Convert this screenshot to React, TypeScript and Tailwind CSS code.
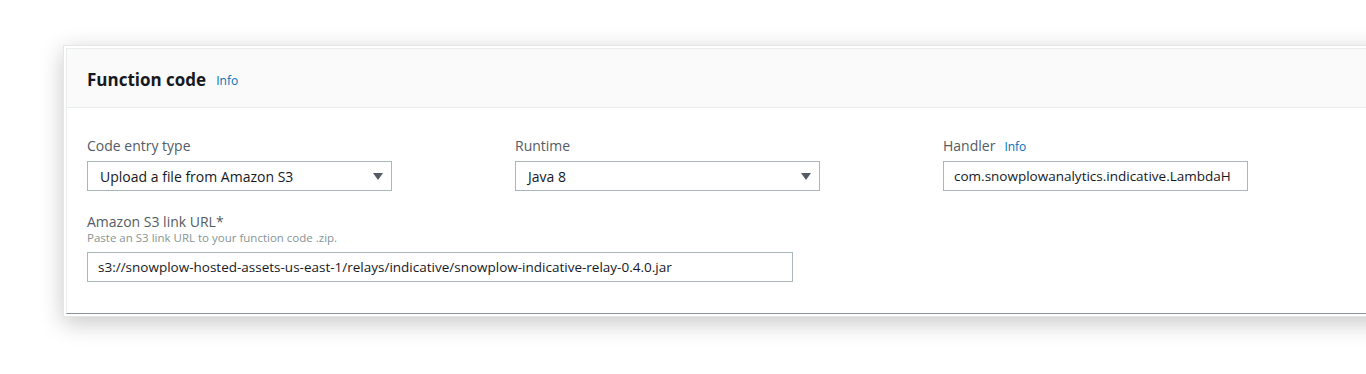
import React from 'react';

const font = { fontFamily: '"Open Sans", "Liberation Sans", Arial, sans-serif' };

const Caret: React.FC = () => (
  <svg width="10" height="7" viewBox="0 0 10 7" className="shrink-0">
    <path d="M0 0 H10 L5 7 Z" fill="#545b64" />
  </svg>
);

const SelectBox: React.FC<{ value: string }> = ({ value }) => (
  <div className="w-[305px] h-[30px] flex items-center justify-between pl-[12px] pr-[8px] border border-[#aab7b8] bg-white text-[14px] text-[#16191f]">
    <span>{value}</span>
    <Caret />
  </div>
);

const TextBox: React.FC<{ value: string; width: string }> = ({ value, width }) => (
  <div className={`${width} h-[30px] flex items-center pl-[10px] pr-[6px] border border-[#aab7b8] bg-white text-[13.5px] text-[#16191f] overflow-hidden whitespace-nowrap`}>
    {value}
  </div>
);

const Label: React.FC<{ children: React.ReactNode; info?: boolean }> = ({ children, info }) => (
  <div className="h-[20px] leading-[20px] text-[14px] text-[#545b64] flex items-baseline gap-[9px] mb-[5px]">
    <span>{children}</span>
    {info && <span className="text-[12px] text-[#0073bb]">Info</span>}
  </div>
);

export default function App() {
  return (
    <div className="w-[1366px] h-[374px] bg-white overflow-hidden" style={font}>
      <div className="ml-[63px] mt-[45px] w-[1340px] p-[2px] bg-white border border-[#e6e6e6] shadow-[0_6px_22px_rgba(0,0,0,0.22)]">
        <div className="border border-[#eaeded] border-b-[#879596] bg-white">
          {/* header */}
          <div className="h-[59px] bg-[#fafafa] border-b border-[#eaeded] px-[20px] flex items-center pt-[3px]">
            <h2 className="text-[17px] font-bold text-[#16191f] leading-[24px]">Function code</h2>
            <span className="ml-[10px] text-[12px] text-[#0073bb] mt-[2px]">Info</span>
          </div>
          {/* body */}
          <div className="px-[20px] pt-[28px] pb-[31px]">
            <div className="flex gap-[123px]">
              <div>
                <Label>Code entry type</Label>
                <SelectBox value="Upload a file from Amazon S3" />
              </div>
              <div>
                <Label>Runtime</Label>
                <SelectBox value="Java 8" />
              </div>
              <div>
                <Label info>Handler</Label>
                <TextBox width="w-[305px]" value="com.snowplowanalytics.indicative.LambdaH" />
              </div>
            </div>
            <div className="mt-[21px]">
              <div className="h-[20px] leading-[20px] text-[14px] text-[#545b64]">Amazon S3 link URL*</div>
              <div className="mt-[-2px] leading-[16px] text-[11.5px] text-[#879596]">Paste an S3 link URL to your function code .zip.</div>
              <div className="mt-[6px]">
                <TextBox width="w-[706px]" value="s3://snowplow-hosted-assets-us-east-1/relays/indicative/snowplow-indicative-relay-0.4.0.jar" />
              </div>
            </div>
          </div>
        </div>
      </div>
    </div>
  );
}
